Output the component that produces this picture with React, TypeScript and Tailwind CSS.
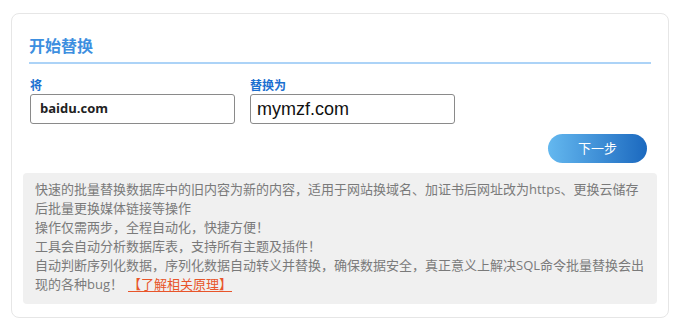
const font = { fontFamily: '"Open Sans", "Noto Sans CJK SC", sans-serif' }

export default function App() {
  return (
    <div className="w-[676px] h-[332px] bg-white pt-[13px] px-[11px]" style={font}>
      <div className="w-[658px] h-[305px] rounded-[8px] border border-[#e6e6e6] px-[11px] pt-[20px]">
        <div className="px-[6px]">
          <h2 className="text-[16px] leading-[24px] font-bold text-[#3d8fe0] pb-[4px] border-b-2 border-[#acd3f7]">
            开始替换
          </h2>

          <div className="flex gap-[15px] mt-[14px] pl-px">
            <div className="w-[205px]">
              <div className="text-[12px] leading-[16px] font-bold text-[#1a6fd0]">将</div>
              <div className="h-[30px] rounded-[3px] border border-[#8a8a8a] flex items-center pl-[9px] text-[13px] font-bold text-[#222]">
                baidu.com
              </div>
            </div>
            <div className="w-[205px]">
              <div className="text-[12px] leading-[16px] font-bold text-[#1a6fd0]">替换为</div>
              <div
                className="h-[30px] rounded-[3px] border border-[#8a8a8a] flex items-center pl-[6px] text-[18px] text-[#111]"
                style={{ fontFamily: '"Liberation Sans", sans-serif' }}
              >
                mymzf.com
              </div>
            </div>
          </div>

          <div className="flex justify-end mt-[10px] pr-[4px]">
            <button className="w-[99px] h-[29px] rounded-full bg-gradient-to-r from-[#64b8ef] to-[#1b69bf] text-white text-[13px]">
              下一步
            </button>
          </div>
        </div>

        <div className="mt-[10px] h-[131px] rounded-[4px] bg-[#f0f0f0] px-[12px] pt-[7px] text-[13px] leading-[19px] text-[#7a7a7a]">
          快速的批量替换数据库中的旧内容为新的内容，适用于网站换域名、加证书后网址改为https、更换云储存
          <br />
          后批量更换媒体链接等操作
          <br />
          操作仅需两步，全程自动化，快捷方便！
          <br />
          工具会自动分析数据库表，支持所有主题及插件！
          <br />
          自动判断序列化数据，序列化数据自动转义并替换，确保数据安全，真正意义上解决SQL命令批量替换会出
          <br />
          现的各种bug！
          <a className="ml-[5px] text-[#e8552a] underline underline-offset-2">【了解相关原理】</a>
        </div>
      </div>
    </div>
  )
}
